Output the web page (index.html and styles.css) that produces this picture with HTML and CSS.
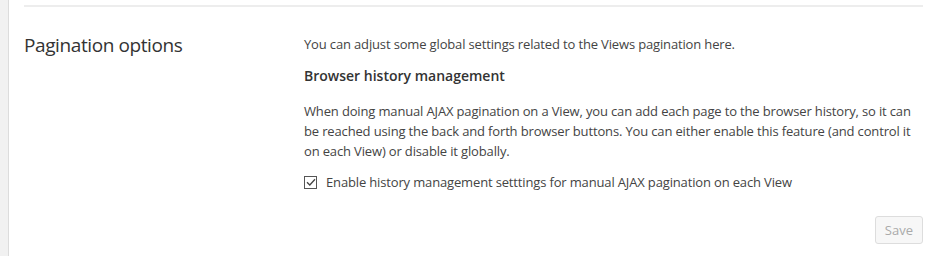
FILE: index.html
```html
<!DOCTYPE html>
<html lang="en">
  <head>
    <meta name="viewport" content="width=device-width, initial-scale=1.0" />
    <title>Pagination options</title>
    <link rel="stylesheet" href="styles.css">
  </head>
  <body>
    <div class="page">
      <div class="sidebar"></div>
      <div class="main">
        <div class="section">
          <h2 class="section-title">Pagination options</h2>
          <div class="section-body">
            <p class="intro">You can adjust some global settings related to the Views pagination here.</p>
            <h3>Browser history management</h3>
            <p class="desc">When doing manual AJAX pagination on a View, you can add each page to the browser history, so it can be reached using the back and forth browser buttons. You can either enable this feature (and control it on each View) or disable it globally.</p>
            <label class="check">
              <span class="box">
                <svg width="10" height="8" viewBox="0 0 10 8"><path d="M1 4.2 L3.8 7 L9 1.2" fill="none" stroke="#444" stroke-width="1.3"/></svg>
              </span>
              Enable history management setttings for manual AJAX pagination on each View
            </label>
          </div>
        </div>
        <div class="actions">
          <button class="btn" disabled>Save</button>
        </div>
      </div>
    </div>
  </body>
</html>
```

FILE: styles.css
```css
* {
  margin: 0;
  padding: 0;
  box-sizing: border-box;
}
body {
  background: #fff;
  font-family: "Open Sans", "Liberation Sans", sans-serif;
  color: #444;
}
.page {
  display: flex;
  min-height: 256px;
}
.sidebar {
  width: 9px;
  background: #f1f1f1;
  border-right: 1px solid #dcdcdc;
}
.main {
  flex: 1;
  padding: 5px 14px 0 15px;
}
.section {
  display: flex;
  border-top: 2px solid #ededed;
  padding-top: 25px;
}
.section-title {
  width: 280px;
  font-size: 19px;
  font-weight: 400;
  letter-spacing: -0.4px;
  color: #333;
  line-height: 26px;
}
.section-body {
  flex: 1;
  font-size: 13px;
  line-height: 20px;
  letter-spacing: -0.15px;
}
.intro {
  margin-top: 2px;
}
h3 {
  font-size: 14px;
  font-weight: 600;
  letter-spacing: 0;
  color: #333;
  margin-top: 11px;
  line-height: 22px;
}
.desc {
  margin-top: 14px;
}
.check {
  display: flex;
  align-items: center;
  gap: 9px;
  margin-top: 11px;
}
.box {
  width: 13px;
  height: 13px;
  border: 1px solid #555;
  display: flex;
  align-items: center;
  justify-content: center;
}
.actions {
  display: flex;
  justify-content: flex-end;
  margin-top: 24px;
}
.btn {
  font-family: inherit;
  font-size: 13px;
  color: #aaa;
  background: #f7f7f7;
  border: 1px solid #ddd;
  border-radius: 3px;
  padding: 3px 9px;
  height: 28px;
}
```
